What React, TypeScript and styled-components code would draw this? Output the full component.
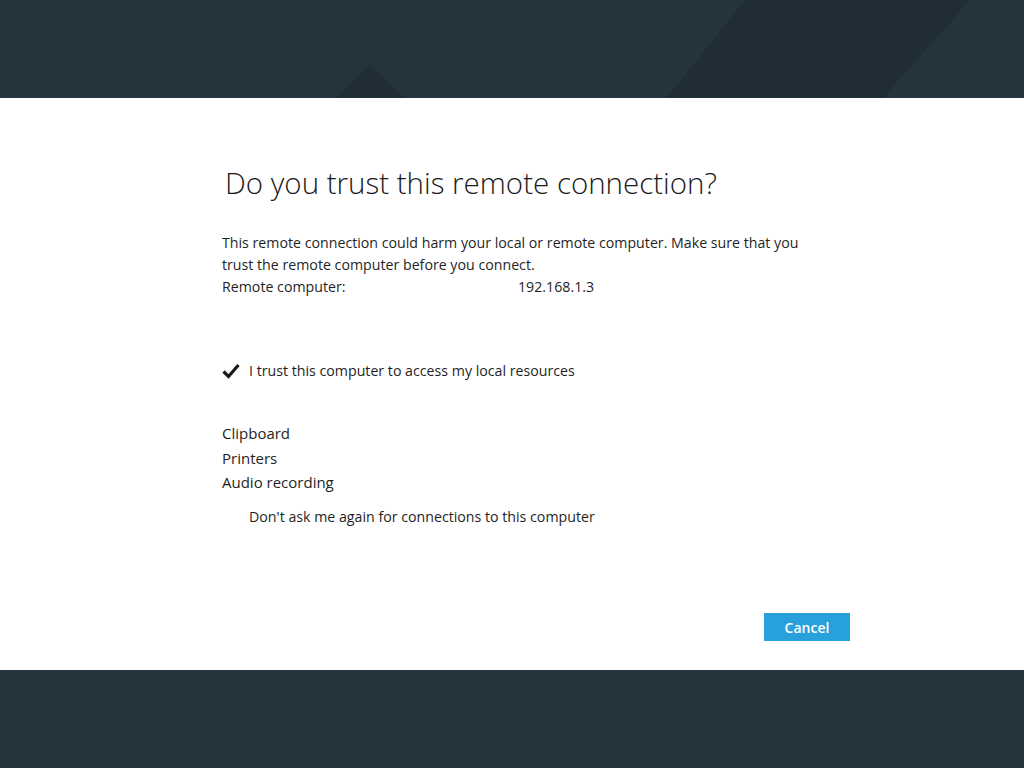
import React from "react";
import styled, { createGlobalStyle } from "styled-components";

const Global = createGlobalStyle`
  html, body { margin: 0; padding: 0; }
  body { font-family: "Open Sans", "Noto Sans", sans-serif; background: #24343c; }
`;

const Page = styled.div`
  width: 1024px;
  height: 768px;
  display: grid;
  grid-template-rows: 98px 1fr 98px;
  overflow: hidden;
`;

const Band = styled.div`
  background: #24343c;
  position: relative;
  overflow: hidden;
`;

const Decor = styled.svg`
  position: absolute;
  inset: 0;
  display: block;
`;

const Sheet = styled.main`
  background: #ffffff;
  display: flex;
  flex-direction: column;
  padding: 0 174px 0 222px;
  color: #1f1f1f;
`;

const Title = styled.h1`
  margin: 65px 0 0 3px;
  font-size: 29.5px;
  font-weight: 300;
  line-height: 40px;
  color: #1a1a1a;
`;

const Paragraph = styled.p`
  margin: 29px 0 0;
  max-width: 590px;
  font-size: 14.2px;
  line-height: 22px;
  font-weight: 400;
`;

const InfoRow = styled.div`
  display: grid;
  grid-template-columns: 296px auto;
  font-size: 14.2px;
  line-height: 22px;
`;

const CheckRow = styled.label`
  display: flex;
  align-items: center;
  gap: 9px;
  margin-top: 62px;
  font-size: 14.2px;
  line-height: 22px;
`;

const List = styled.ul`
  list-style: none;
  margin: 39px 0 0;
  padding: 0;
  font-size: 15px;
  line-height: 24.5px;
`;

const Note = styled.div`
  margin: 11px 0 0 27px;
  font-size: 14.2px;
  line-height: 22px;
`;

const Actions = styled.div`
  margin-top: auto;
  margin-bottom: 29px;
  display: flex;
  justify-content: flex-end;
`;

const Button = styled.button`
  width: 86px;
  height: 28px;
  border: none;
  background: #27a0dc;
  color: #ffffff;
  font-family: "Open Sans", "Noto Sans", sans-serif;
  font-size: 14px;
  font-weight: 600;
  padding: 0;
  cursor: pointer;
`;

const Check = () => (
  <svg width="18" height="16" viewBox="0 0 18 16">
    <path d="M1.5 8.5 L6.5 13.5 L16.5 2" fill="none" stroke="#1a1a1a" strokeWidth="3.2" />
  </svg>
);

export default function App() {
  return (
    <>
      <Global />
      <Page>
        <Band>
          <Decor width="1024" height="98" viewBox="0 0 1024 98">
            <polygon points="336,98 370,64 404,98" fill="#212d35" />
            <polygon points="745,0 970,0 883,98 667,98" fill="#212d35" />
          </Decor>
        </Band>
        <Sheet>
          <Title>Do you trust this remote connection?</Title>
          <Paragraph>
            This remote connection could harm your local or remote computer. Make sure that you
            trust the remote computer before you connect.
          </Paragraph>
          <InfoRow>
            <span>Remote computer:</span>
            <span>192.168.1.3</span>
          </InfoRow>
          <CheckRow>
            <Check />
            <span>I trust this computer to access my local resources</span>
          </CheckRow>
          <List>
            <li>Clipboard</li>
            <li>Printers</li>
            <li>Audio recording</li>
          </List>
          <Note>Don't ask me again for connections to this computer</Note>
          <Actions>
            <Button>Cancel</Button>
          </Actions>
        </Sheet>
        <Band />
      </Page>
    </>
  );
}
